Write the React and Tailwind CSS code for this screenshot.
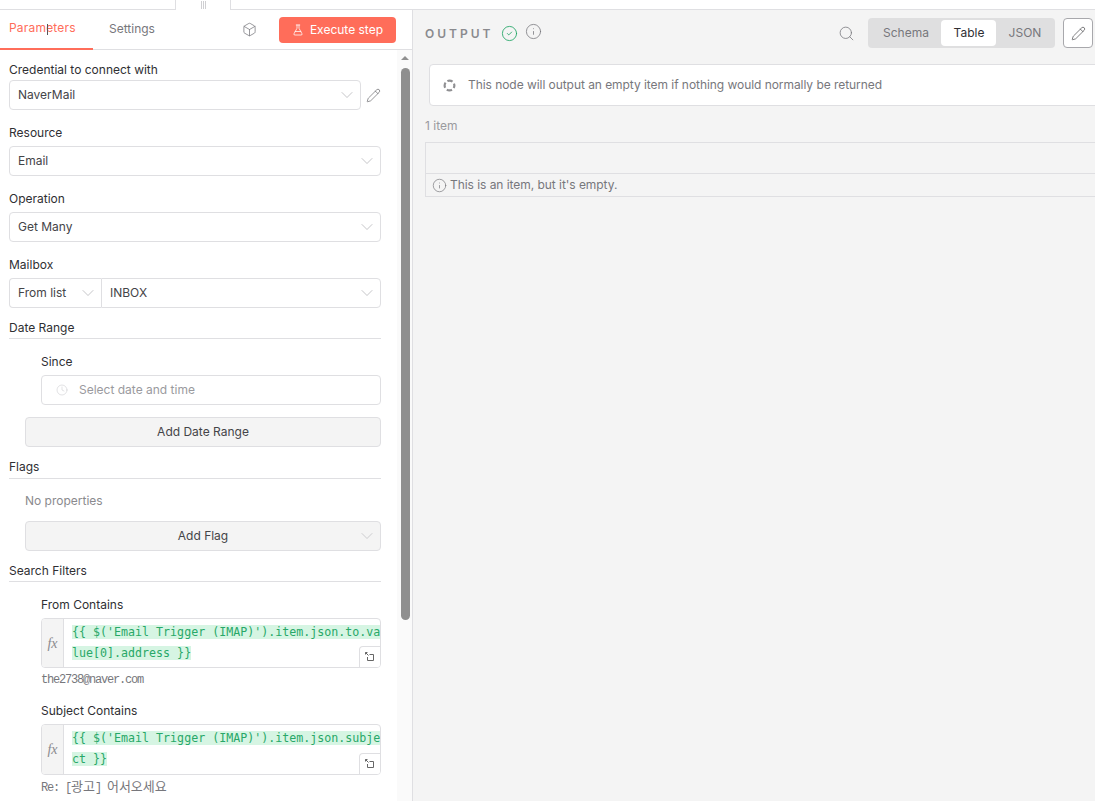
import { Box, ChevronDown, CircleCheck, Clock, FlaskConical, Info, Pencil, Search } from "lucide-react";

const Label = ({ children, className = "" }) => (
  <div className={`text-[12px] leading-[16px] text-[#2f2f33] ${className}`}>{children}</div>
);

const Select = ({ value, className = "" }) => (
  <div className={`flex h-[30px] items-center justify-between rounded-[4px] border border-[#dfdfe2] bg-white pl-[8px] pr-[3px] text-[12px] text-[#444448] ${className}`}>
    <span>{value}</span>
    <ChevronDown size={20} strokeWidth={0.8} className="text-[#a8a8ac]" />
  </div>
);

const SectionTitle = ({ children, className = "pb-[3px]" }) => (
  <div className={`border-b border-[#dfdfe2] text-[12px] leading-[16px] text-[#2f2f33] ${className}`}>{children}</div>
);

const ExprIcon = () => (
  <svg width="10" height="10" viewBox="0 0 10 10" fill="none" stroke="#666" strokeWidth="1">
    <path d="M0.5 2.5 V0.5 H2.5 M0.5 0.5 L3.5 3.5" />
    <path d="M4.5 2.5 H8.5 V8.5 H2.5 V5" />
  </svg>
);

const Expression = ({ first, second, hint, height = "h-[50px]", hintGap = "mt-[5px]" }) => (
  <div>
    <div className={`relative flex overflow-hidden rounded-[4px] border border-[#dfdfe2] bg-white ${height}`}>
      <div className="flex w-[22px] shrink-0 items-center justify-center border-r border-[#dfdfe2] bg-[#f4f4f4] font-['Liberation_Serif',serif] text-[14px] italic text-[#8a8a8e]">
        fx
      </div>
      <div className="whitespace-nowrap pl-[8px] pt-[3px] font-['DejaVu_Sans_Mono',monospace] text-[11.65px] leading-[21px] text-[#28a868]">
        <div><span className="bg-[#d6f5e3]">{first}</span></div>
        <div><span className="bg-[#d6f5e3]">{second}</span></div>
      </div>
      <div className="absolute bottom-0 right-0 flex h-[21px] w-[21px] items-center justify-center rounded-tl-[4px] border-l border-t border-[#dfdfe2] bg-white">
        <ExprIcon />
      </div>
    </div>
    <div className={`font-['Liberation_Mono',monospace] text-[12px] leading-[14px] tracking-[-1.2px] text-[#77777c] ${hintGap}`}>{hint}</div>
  </div>
);

export default function App() {
  return (
    <div className="flex h-[801px] w-[1095px] flex-col overflow-hidden bg-white font-['Inter',sans-serif]">
      {/* drag handle strip */}
      <div className="h-[10px] shrink-0 border-b border-[#dfdfe2]">
        <div className="ml-[175px] flex h-[10px] w-[56px] items-center justify-center gap-[1px] border-x border-[#dfdfe2] bg-white">
          <span className="h-[8px] w-[1px] bg-[#cfcfd2]" />
          <span className="h-[8px] w-[1px] bg-[#cfcfd2]" />
          <span className="h-[8px] w-[1px] bg-[#cfcfd2]" />
        </div>
      </div>

      <div className="flex min-h-0 flex-1">
        {/* parameters panel */}
        <div className="flex w-[413px] shrink-0 flex-col border-r border-[#dfdfe2]">
          <div className="flex h-[40px] shrink-0 items-start border-b border-[#dfdfe2]">
            <div className="relative flex h-[40px] w-[93px] items-center border-b-2 border-[#ff6d5a] pb-[2px] pl-[9px] text-[12px] tracking-[0.2px] text-[#ff6d5a]">
              Parameters
              <span className="absolute left-[47px] top-[14px] h-[11px] w-[1px] bg-[#55555a]" />
            </div>
            <div className="flex h-[38px] items-center pl-[16px] text-[12px] text-[#77777c]">Settings</div>
            <Box size={15} strokeWidth={1.2} className="ml-[87px] mt-[12px] text-[#77777c]" />
            <button className="ml-[22px] mt-[7px] flex h-[26px] w-[117px] items-center justify-center gap-[6px] rounded-[4px] bg-[#ff6d5a] text-[12px] text-white">
              <FlaskConical size={12} strokeWidth={1.5} />
              Execute step
            </button>
          </div>

          <div className="flex min-h-0 flex-1">
            <div className="min-w-0 flex-1 overflow-hidden pl-[9px] pr-[16px] pt-[12px]">
              <Label className="mb-[2px]">Credential to connect with</Label>
              <div className="flex items-center">
                <Select value="NaverMail" className="flex-1" />
                <Pencil size={15} strokeWidth={1} className="ml-[5px] text-[#55555a]" />
              </div>

              <Label className="mb-[5px] mt-[15px]">Resource</Label>
              <Select value="Email" />

              <Label className="mb-[5px] mt-[15px]">Operation</Label>
              <Select value="Get Many" />

              <Label className="mb-[5px] mt-[15px]">Mailbox</Label>
              <div className="flex">
                <Select value="From list" className="w-[92px] shrink-0 rounded-r-none border-r-0" />
                <Select value="INBOX" className="flex-1 rounded-l-none" />
              </div>

              <div className="mt-[12px]"><SectionTitle className="pb-[2px]">Date Range</SectionTitle></div>

              <div className="pl-[16px]">
                <div className="pl-[16px]">
                  <Label className="mb-[5px] mt-[15px]">Since</Label>
                  <div className="flex h-[30px] items-center rounded-[4px] border border-[#dfdfe2] bg-white pl-[14px] text-[12px] text-[#9a9a9e]">
                    <Clock size={12} strokeWidth={1} className="mr-[11px] text-[#c4c4c8]" />
                    Select date and time
                  </div>
                </div>
                <div className="mt-[12px] flex h-[30px] items-center justify-center rounded-[4px] border border-[#dfdfe2] bg-[#f4f4f4] text-[12px] text-[#444448]">
                  Add Date Range
                </div>
              </div>

              <div className="mt-[12px]"><SectionTitle>Flags</SectionTitle></div>

              <div className="pl-[16px]">
                <div className="mt-[14px] text-[12px] leading-[16px] text-[#8a8a8e]">No properties</div>
                <div className="relative mt-[12px] flex h-[30px] items-center justify-center rounded-[4px] border border-[#dfdfe2] bg-[#f4f4f4] text-[12px] text-[#444448]">
                  Add Flag
                  <ChevronDown size={20} strokeWidth={0.8} className="absolute right-[3px] text-[#b8b8bc]" />
                </div>
              </div>

              <div className="mt-[12px]"><SectionTitle className="pb-[2px]">Search Filters</SectionTitle></div>

              <div className="pl-[32px]">
                <Label className="mb-[5px] mt-[15px]">From Contains</Label>
                <Expression
                  first="{{ $('Email Trigger (IMAP)').item.json.to.va"
                  second="lue[0].address }}"
                  hint="the2738@naver.com"
                />
                <Label className="mb-[5px] mt-[16px]">Subject Contains</Label>
                <Expression
                  first="{{ $('Email Trigger (IMAP)').item.json.subje"
                  second="ct }}"
                  height="h-[51px]"
                  hintGap="mt-[4px]"
                  hint={<>Re: [<span className="font-['Noto_Sans_CJK_KR',sans-serif] text-[13px] tracking-normal">광고</span>] <span className="font-['Noto_Sans_CJK_KR',sans-serif] text-[13px] tracking-normal">어서오세요</span></>}
                />
              </div>
            </div>

            {/* scrollbar */}
            <div className="flex w-[15px] shrink-0 flex-col items-center bg-[#fafafa] pl-[1px]">
              <div className="mt-[6px] h-0 w-0 border-x-[4px] border-b-[4px] border-x-transparent border-b-[#8f8f8f]" />
              <div className="mt-[8px] h-[552px] w-[9px] rounded-[5px] bg-[#8f8f8f]" />
            </div>
          </div>
        </div>

        {/* output panel */}
        <div className="min-w-0 flex-1 overflow-hidden bg-[#f4f4f4]">
          <div className="flex h-[54px] w-[682px] items-start pl-[12px]">
            <div className="mt-[17px] text-[12px] font-semibold leading-[14px] tracking-[3px] text-[#8a8a8e]">OUTPUT</div>
            <CircleCheck size={17} strokeWidth={1.2} className="ml-[8px] mt-[15px] text-[#1fa463]" />
            <Info size={17} strokeWidth={1.1} className="ml-[7px] mt-[13px] text-[#77777c]" />
            <Search size={17} strokeWidth={1.1} className="ml-[296px] mt-[15px] text-[#77777c]" />
            <div className="ml-[13px] mt-[8px] flex h-[30px] w-[187px] items-center rounded-[4px] bg-[#dfdfe0] px-[2px] text-[12px] text-[#77777c]">
              <div className="flex w-[71px] justify-center">Schema</div>
              <div className="flex h-[26px] w-[55px] items-center justify-center rounded-[4px] bg-white text-[#2f2f33]">Table</div>
              <div className="flex w-[57px] justify-center">JSON</div>
            </div>
            <div className="ml-[8px] mt-[8px] flex h-[30px] w-[30px] items-center justify-center rounded-[4px] border border-[#a8a8ac] bg-white">
              <Pencil size={15} strokeWidth={1.1} className="text-[#444448]" />
            </div>
          </div>

          <div className="ml-[16px] flex h-[42px] w-[700px] items-center rounded-l-[4px] border border-[#dfdfe2] bg-white pl-[13px] text-[12px] tracking-[-0.055px] text-[#77777c]">
            <svg width="13" height="13" viewBox="0 0 12 12" fill="none" stroke="#8f8f92" strokeWidth="2" className="mr-[12px]">
              <circle cx="6" cy="6" r="4.5" strokeDasharray="5 2.07" strokeDashoffset="-4.5" />
            </svg>
            This node will output an empty item if nothing would normally be returned
          </div>

          <div className="ml-[12px] mt-[12px] text-[12px] leading-[16px] text-[#9a9a9e]">1 item</div>

          <div className="ml-[12px] mt-[8px] w-[700px] border border-[#dfdfe2]">
            <div className="h-[31px] border-b border-[#dfdfe2]" />
            <div className="flex h-[22px] items-center pl-[6px] text-[12px] tracking-[-0.05px] text-[#77777c]">
              <Info size={15} strokeWidth={1.1} className="mr-[3px]" />
              This is an item, but it's empty.
            </div>
          </div>
        </div>
      </div>
    </div>
  );
}
